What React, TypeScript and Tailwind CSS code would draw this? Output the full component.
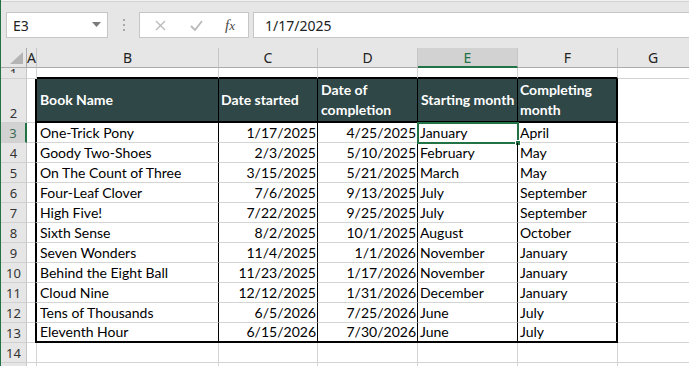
import React from "react";

const rows = [
  ["One-Trick Pony", "1/17/2025", "4/25/2025", "January", "April"],
  ["Goody Two-Shoes", "2/3/2025", "5/10/2025", "February", "May"],
  ["On The Count of Three", "3/15/2025", "5/21/2025", "March", "May"],
  ["Four-Leaf Clover", "7/6/2025", "9/13/2025", "July", "September"],
  ["High Five!", "7/22/2025", "9/25/2025", "July", "September"],
  ["Sixth Sense", "8/2/2025", "10/1/2025", "August", "October"],
  ["Seven Wonders", "11/4/2025", "1/1/2026", "November", "January"],
  ["Behind the Eight Ball", "11/23/2025", "1/17/2026", "November", "January"],
  ["Cloud Nine", "12/12/2025", "1/31/2026", "December", "January"],
  ["Tens of Thousands", "6/5/2026", "7/25/2026", "June", "July"],
  ["Eleventh Hour", "6/15/2026", "7/30/2026", "June", "July"],
];

const uiFont = { fontFamily: '"Noto Sans", "Open Sans", sans-serif' };
const cellFont = { fontFamily: 'Lato, "Noto Sans", sans-serif' };

function RowHead({ n, h, active, last }: { n: string; h: string; active?: boolean; last?: boolean }) {
  return (
    <div
      className={`${h} w-[26px] shrink-0 flex items-end justify-center text-[13px] leading-[18px] overflow-hidden ${
        active
          ? "bg-[#d2d2d2] text-[#3d6b52] border-r-2 border-r-[#217346]"
          : "bg-[#e6e6e6] text-[#333] border-r border-r-[#c6c6c6]"
      } ${last ? "" : "border-b border-b-[#d0d0d0]"}`}
      style={uiFont}
    >
      {n}
    </div>
  );
}

function Grid({ w, h, extra = "" }: { w: string; h: string; extra?: string }) {
  return <div className={`${w} ${h} shrink-0 border-r border-b border-[#d4d4d4] ${extra}`} />;
}

export default function App() {
  return (
    <div className="w-[689px] h-[366px] overflow-hidden bg-white border-l border-l-[#217346] flex flex-col" style={cellFont}>
      {/* toolbar */}
      <div className="h-[48px] shrink-0 bg-[#e6e6e6] flex flex-col">
        <div className="h-[1px] bg-[#f2f2f2]" />
        <div className="h-[1px] bg-[#d2d2d2]" />
        <div className="h-[10px]" />
        <div className="h-[26px] flex items-stretch">
          <div className="ml-[5px] w-[102px] bg-white border border-[#c6c6c6] flex items-center justify-between pl-[6px] pr-[6px]">
            <span className="text-[14px] text-[#222]" style={uiFont}>E3</span>
            <svg width="9" height="6" viewBox="0 0 9 6">
              <polygon points="0,0 9,0 4.5,5" fill="#7a7a7a" />
            </svg>
          </div>
          <div className="w-[31px] flex items-center justify-center">
            <div className="flex flex-col gap-[3px]">
              <div className="w-[2px] h-[2px] bg-[#a8a8a8]" />
              <div className="w-[2px] h-[2px] bg-[#a8a8a8]" />
              <div className="w-[2px] h-[2px] bg-[#a8a8a8]" />
            </div>
          </div>
          <div className="w-[110px] bg-white border border-[#c6c6c6] flex items-center">
            <div className="w-[36px] flex justify-center pl-[4px]">
              <svg width="11" height="11" viewBox="0 0 11 11">
                <path d="M1 1 L10 10 M10 1 L1 10" stroke="#b9b9b9" strokeWidth="1.3" fill="none" />
              </svg>
            </div>
            <div className="w-[36px] flex justify-center pl-[4px]">
              <svg width="13" height="11" viewBox="0 0 13 11">
                <path d="M1 6 L5 10 L12 1" stroke="#b9b9b9" strokeWidth="1.8" fill="none" />
              </svg>
            </div>
            <div className="w-[36px] flex justify-center">
              <span className="italic text-[#4a4a4a] text-[15px] leading-none" style={{ fontFamily: '"Liberation Serif", serif' }}>
                f<span className="text-[13px]">x</span>
              </span>
            </div>
          </div>
          <div className="ml-[4px] flex-1 bg-white border border-r-0 border-[#c6c6c6] flex items-center pl-[11px]">
            <span className="text-[14px] text-[#222]" style={uiFont}>1/17/2025</span>
          </div>
        </div>
        <div className="flex-1" />
      </div>

      {/* column headers */}
      <div className="h-[20px] shrink-0 flex bg-[#e6e6e6] text-[14px] text-[#222]" style={uiFont}>
        <div className="w-[26px] shrink-0 border-r border-b border-[#ababab]">
          <svg width="25" height="19" viewBox="0 0 25 19">
            <polygon points="9,16 22,16 22,4" fill="#b4b4b4" />
          </svg>
        </div>
        <div className="w-[10px] shrink-0 border-r border-r-[#c6c6c6] border-b border-b-[#ababab] flex items-center justify-center">A</div>
        <div className="w-[182px] shrink-0 border-r border-r-[#c6c6c6] border-b border-b-[#ababab] flex items-center justify-center">B</div>
        <div className="w-[99px] shrink-0 border-r border-r-[#c6c6c6] border-b border-b-[#ababab] flex items-center justify-center">C</div>
        <div className="w-[100px] shrink-0 border-r border-r-[#c6c6c6] border-b border-b-[#ababab] flex items-center justify-center">D</div>
        <div className="w-[100px] shrink-0 border-r border-r-[#c6c6c6] border-b-2 border-b-[#217346] bg-[#d2d2d2] text-[#217346] flex items-center justify-center">E</div>
        <div className="w-[100px] shrink-0 border-r border-r-[#c6c6c6] border-b border-b-[#ababab] flex items-center justify-center">F</div>
        <div className="flex-1 border-b border-b-[#ababab] flex items-center justify-center pr-[1px]">G</div>
      </div>

      {/* row 1 */}
      <div className="h-[11px] shrink-0 flex">
        <div className="h-[11px] w-[26px] shrink-0 bg-[#e6e6e6] border-r border-r-[#c6c6c6] border-b border-b-[#d0d0d0] flex justify-center">
          <div className="h-[5px] overflow-hidden text-[13px] leading-[14px] text-[#333]" style={uiFont}>
            <div className="-mt-[2px]">1</div>
          </div>
        </div>
        <Grid w="w-[10px]" h="h-[11px]" />
        <div className="w-[182px] h-[11px] shrink-0 border-r border-r-[#d4d4d4] border-b-2 border-b-black" />
        <div className="w-[99px] h-[11px] shrink-0 border-r border-r-[#d4d4d4] border-b-2 border-b-black" />
        <div className="w-[100px] h-[11px] shrink-0 border-r border-r-[#d4d4d4] border-b-2 border-b-black" />
        <div className="w-[100px] h-[11px] shrink-0 border-r border-r-[#d4d4d4] border-b-2 border-b-black" />
        <div className="w-[100px] h-[11px] shrink-0 border-r border-r-[#d4d4d4] border-b-2 border-b-black" />
        <Grid w="flex-1" h="h-[11px]" extra="border-r-0" />
      </div>

      {/* row 2 header */}
      <div className="h-[44px] shrink-0 flex">
        <RowHead n="2" h="h-[44px]" />
        <div className="w-[8px] h-[44px] shrink-0 border-b border-b-[#d4d4d4]" />
        <div className="w-[184px] h-[44px] shrink-0 bg-[#2f4747] border-l-2 border-l-black border-r border-r-black border-b-2 border-b-black flex items-center pl-[3px] text-white font-bold text-[14px] leading-[18px]">
          Book Name
        </div>
        <div className="w-[99px] h-[44px] shrink-0 bg-[#2f4747] border-r border-r-black border-b-2 border-b-black flex items-center pl-[2px] text-white font-bold text-[14px] leading-[18px] whitespace-nowrap">
          Date started
        </div>
        <div className="w-[100px] h-[44px] shrink-0 bg-[#2f4747] border-r border-r-black border-b-2 border-b-black flex items-center pl-[3px] text-white font-bold text-[14px] leading-[20px] whitespace-nowrap">
          <div>
            Date of
            <br />
            completion
          </div>
        </div>
        <div className="w-[100px] h-[44px] shrink-0 bg-[#2f4747] border-r border-r-black border-b-2 border-b-black flex items-center pl-[3px] text-white font-bold text-[14px] leading-[18px] whitespace-nowrap">
          Starting month
        </div>
        <div className="w-[100px] h-[44px] shrink-0 bg-[#2f4747] border-r-2 border-r-black border-b-2 border-b-black flex items-center pl-[2px] text-white font-bold text-[14px] leading-[20px] whitespace-nowrap">
          <div>
            Completing
            <br />
            month
          </div>
        </div>
        <Grid w="flex-1" h="h-[44px]" extra="border-r-0" />
      </div>

      {/* data rows */}
      {rows.map((r, i) => {
        const last = i === rows.length - 1;
        const bb = last ? "border-b-2 border-b-black" : "border-b border-b-[#d4d4d4]";
        const first = i === 0;
        return (
          <div key={i} className="h-[20px] shrink-0 flex text-[14px] text-black leading-[18px]">
            <RowHead n={String(i + 3)} h="h-[20px]" active={first} />
            <div className="w-[8px] h-[20px] shrink-0 border-b border-b-[#d4d4d4]" />
            <div className={`w-[184px] h-[20px] shrink-0 border-l-2 border-l-black border-r border-r-black ${bb} flex items-end pl-[3px] whitespace-nowrap`}>
              {r[0]}
            </div>
            <div className={`w-[99px] h-[20px] shrink-0 border-r border-r-black ${bb} flex items-end justify-end pr-[1px]`}>
              {r[1]}
            </div>
            <div className={`w-[100px] h-[20px] shrink-0 border-r border-r-black ${bb} flex items-end justify-end pr-[1px]`}>
              {r[2]}
            </div>
            <div className={`relative w-[100px] h-[20px] shrink-0 border-r border-r-black ${bb} flex items-end pl-[2px]`}>
              {r[3]}
              {first && (
                <>
                  <div className="absolute -left-[1px] -top-[1px] w-[102px] h-[22px] border-2 border-[#217346]" />
                  <div className="absolute -right-[4px] -bottom-[4px] w-[6px] h-[6px] bg-[#217346] border border-white" />
                </>
              )}
            </div>
            <div className={`w-[100px] h-[20px] shrink-0 border-r-2 border-r-black ${bb} flex items-end pl-[2px]`}>
              {r[4]}
            </div>
            <Grid w="flex-1" h="h-[20px]" extra="border-r-0" />
          </div>
        );
      })}

      {/* rows 14, 15 */}
      {["14", ""].map((n, k) => (
        <div key={k} className="h-[20px] shrink-0 flex">
          <RowHead n={n} h="h-[20px]" />
          <Grid w="w-[10px]" h="h-[20px]" />
          <Grid w="w-[182px]" h="h-[20px]" />
          <Grid w="w-[99px]" h="h-[20px]" />
          <Grid w="w-[100px]" h="h-[20px]" />
          <Grid w="w-[100px]" h="h-[20px]" />
          <Grid w="w-[100px]" h="h-[20px]" />
          <Grid w="flex-1" h="h-[20px]" extra="border-r-0" />
        </div>
      ))}
    </div>
  );
}
